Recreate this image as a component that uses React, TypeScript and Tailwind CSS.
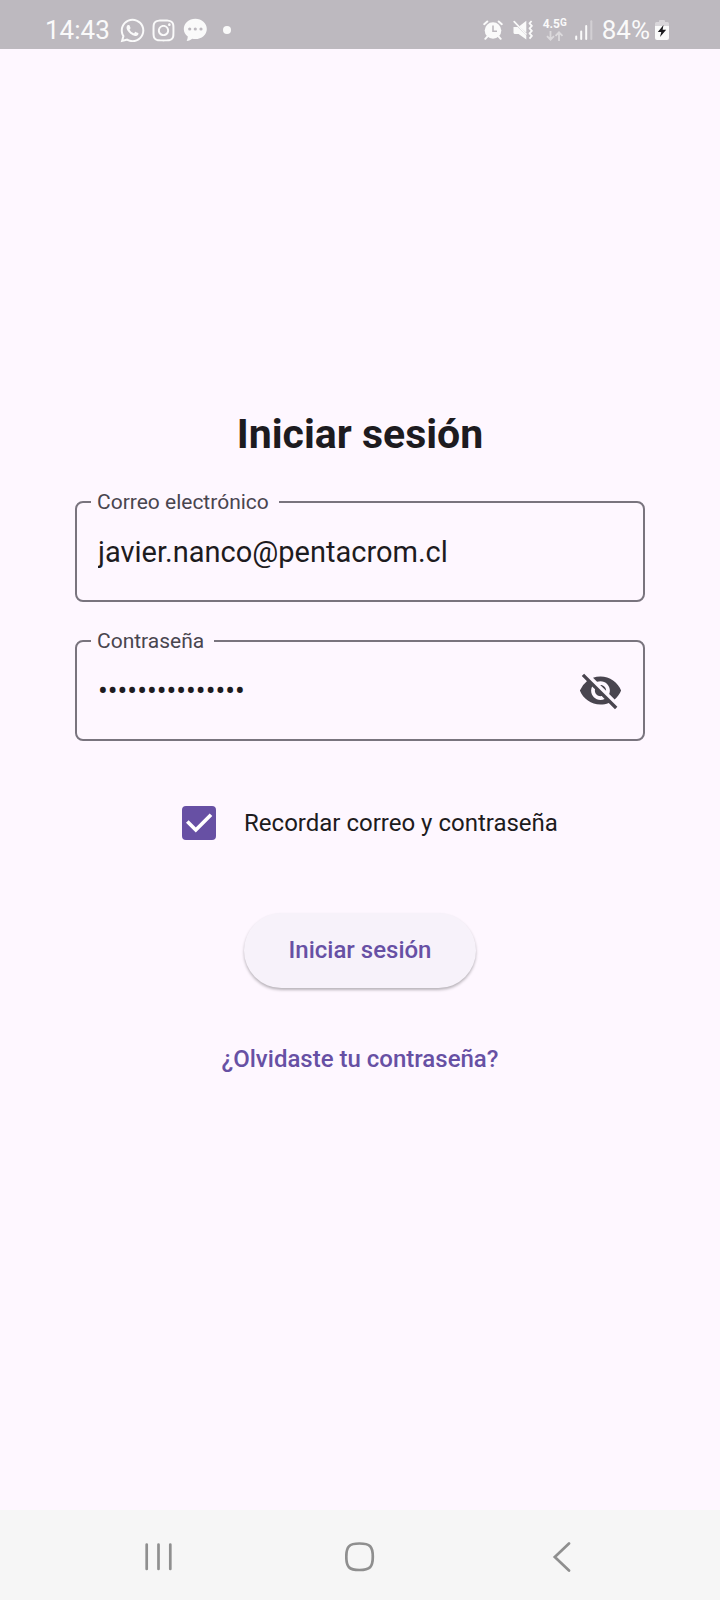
import { useState, type ReactNode } from "react";
import { FaInstagram, FaWhatsapp } from "react-icons/fa";
import { MdVisibility, MdVisibilityOff } from "react-icons/md";

function ChatIcon() {
  return (
    <svg viewBox="0 0 24 24" className="h-6 w-6" aria-hidden="true">
      <path
        fill="currentColor"
        d="M12.3 0.8C5.9 0.8 0.8 5.3 0.8 11c0 3.300 1.500 5.700 4 7.500-.1 1.500-.4 3.100-1.100 4.400 2.300-.1 4.100-.9 5.500-2.100 1 .2 2 .3 3.100.3 6.400 0 11.500-4.400 11.500-10.100S18.700.8 12.300.8Z"
      />
      <g fill="#bdb9bf">
        <circle cx="6.700" cy="11" r="1.600" />
        <circle cx="12.300" cy="11" r="1.600" />
        <circle cx="18" cy="11" r="1.600" />
      </g>
    </svg>
  );
}

function AlarmIcon() {
  return (
    <svg viewBox="0 0 20 20" className="h-5 w-5" aria-hidden="true">
      <circle cx="10" cy="10.500" r="8.300" fill="currentColor" />
      <path
        d="M1.200 4.200 4.300 1.500M18.800 4.200 15.700 1.500M4.300 16.600 2.300 18.800M15.700 16.600 17.700 18.800"
        stroke="currentColor"
        strokeWidth="2"
        strokeLinecap="round"
      />
      <path d="M10 5.500V11.300H14" fill="none" stroke="#bdb9bf" strokeWidth="1.600" />
    </svg>
  );
}

function VibrateIcon() {
  return (
    <svg viewBox="0 0 20 20" className="h-5 w-5" aria-hidden="true">
      <path fill="currentColor" d="M0.500 7h4.200L13.300 15.500V19.500L5.600 13.900H1.600Q.5 13.900 .5 12.800ZM6.300 6.200 13.300 .7V12.800Z" />
      <path d="M1.200 1.700 13 14" stroke="currentColor" strokeWidth="1.700" strokeLinecap="round" />
      <path
        d="M18.600 1 16.500 3.300 18.900 5.800 16.500 8.300 18.900 10.800 16.500 13.300 18.900 15.800 16.500 18.600"
        fill="none"
        stroke="currentColor"
        strokeWidth="1.800"
        strokeLinejoin="round"
      />
    </svg>
  );
}

function DataArrowsIcon() {
  return (
    <svg viewBox="0 0 18 10" className="h-[10px] w-[18px] opacity-50" aria-hidden="true">
      <path
        d="M4.500 0V8.500M1 5.200 4.500 8.700 8 5.200M13 10V1.500M9.500 4.800 13 1.300 16.500 4.800"
        fill="none"
        stroke="currentColor"
        strokeWidth="1.800"
      />
    </svg>
  );
}

function SignalIcon() {
  return (
    <svg viewBox="0 0 18 20" className="h-5 w-[18px]" aria-hidden="true">
      <path d="M1.200 16.500V19M6.200 11.500V19M11.200 6V19" stroke="currentColor" strokeWidth="2" strokeLinecap="round" />
      <path d="M16.300 1.300V19" stroke="currentColor" strokeWidth="2" strokeLinecap="round" opacity="0.350" />
    </svg>
  );
}

function BatteryIcon() {
  return (
    <svg viewBox="0 0 14 20" className="h-5 w-[14px]" aria-hidden="true">
      <path
        d="M4 1q0-1 1-1h4q1 0 1 1v1h2.500Q14 2 14 3.500V7H0V3.500Q0 2 1.500 2H4Z"
        fill="currentColor"
        opacity="0.450"
      />
      <path d="M0 6H14V18Q14 20 12 20H2Q0 20 0 18Z" fill="currentColor" />
      <path d="M8.500 5 2.800 12h3.500l-1.300 5 6.200-7.200H7.600Z" fill="#1c1b1f" />
    </svg>
  );
}

function StatusBar() {
  return (
    <header className="flex h-[49px] items-center justify-between bg-[#bdb9bf] pt-[11px] pr-[51px] pl-[45px] text-[26px] leading-none text-[#fafafa]">
      <div className="flex items-center">
        <span>14:43</span>
        <FaWhatsapp className="ml-[9px] h-[27px] w-[27px]" />
        <FaInstagram className="ml-[5px] h-[25px] w-[25px]" />
        <span className="ml-[7px]">
          <ChatIcon />
        </span>
        <span className="ml-4 h-2 w-2 rounded-full bg-[#fafafa]" />
      </div>
      <div className="flex items-center">
        <AlarmIcon />
        <span className="ml-[10px]">
          <VibrateIcon />
        </span>
        <span className="ml-[10px] flex flex-col items-center gap-[2px]">
          <span className="flex items-start text-[12px] leading-[10px] font-bold">
            4.5<span className="text-[10px] leading-[8px]">G</span>
          </span>
          <DataArrowsIcon />
        </span>
        <span className="ml-2">
          <SignalIcon />
        </span>
        <span className="ml-[9px]">84%</span>
        <span className="ml-[5px]">
          <BatteryIcon />
        </span>
      </div>
    </header>
  );
}

interface FieldProps {
  id: string;
  label: string;
  type: string;
  defaultValue: string;
  children?: ReactNode;
}

function OutlinedField({ id, label, type, defaultValue, children }: FieldProps) {
  return (
    <div className="relative flex h-[101px] items-center rounded-lg border-2 border-[#79747e] pr-5 pl-4">
      <label
        htmlFor={id}
        className="absolute -top-[13px] left-[14px] bg-[#fef7ff] pr-[10px] pl-[6px] text-[21px] leading-6 text-[#49454f]"
      >
        {label}
      </label>
      <input
        id={id}
        type={type}
        defaultValue={defaultValue}
        className="h-full min-w-0 flex-1 bg-transparent pl-[5px] text-[29px] text-[#1d1b20] outline-none"
      />
      {children}
    </div>
  );
}

function LoginForm() {
  const [visible, setVisible] = useState(false);
  const [remember, setRemember] = useState(true);

  return (
    <form className="flex flex-col items-center" onSubmit={(event) => event.preventDefault()}>
      <h1 className="text-[41px] leading-[44px] font-bold">Iniciar sesión</h1>
      <div className="mt-[45px] flex w-full flex-col gap-[38px]">
        <OutlinedField id="email" label="Correo electrónico" type="text" defaultValue="javier.nanco@pentacrom.cl" />
        <OutlinedField
          id="password"
          label="Contraseña"
          type={visible ? "text" : "password"}
          defaultValue="contrasena12345"
        >
          <button
            type="button"
            aria-label="Mostrar contraseña"
            onClick={() => setVisible(!visible)}
            className="text-[#49454f]"
          >
            {visible ? <MdVisibility className="h-[45px] w-[45px]" /> : <MdVisibilityOff className="h-[45px] w-[45px]" />}
          </button>
        </OutlinedField>
      </div>
      <div className="mt-[37px] flex items-center pr-2">
        <span className="grid h-[90px] w-[90px] place-items-center">
          <input
            id="remember"
            type="checkbox"
            checked={remember}
            onChange={(event) => setRemember(event.target.checked)}
            className="col-start-1 row-start-1 h-[34px] w-[34px] appearance-none rounded-[4px] border-4 border-[#49454f] checked:border-[#6750a4] checked:bg-[#6750a4]"
          />
          {remember && (
            <svg
              viewBox="0 0 34 34"
              className="pointer-events-none col-start-1 row-start-1 h-[34px] w-[34px]"
              aria-hidden="true"
            >
              <path d="M5.300 15.500 13.800 24 29 8.800" fill="none" stroke="#fff" strokeWidth="3.700" />
            </svg>
          )}
        </span>
        <label htmlFor="remember" className="text-[24px] leading-8">
          Recordar correo y contraseña
        </label>
      </div>
      <button
        type="submit"
        className="mt-[45px] h-[75px] rounded-full bg-[#f7f2fa] px-[45px] pb-[2px] text-[24px] font-medium text-[#6750a4] shadow-[0_2px_3px_rgba(0,0,0,0.28)]"
      >
        Iniciar sesión
      </button>
      <a href="#recuperar" className="mt-8 flex h-[78px] items-center px-6 text-[24px] font-medium text-[#6750a4]">
        ¿Olvidaste tu contraseña?
      </a>
    </form>
  );
}

function NavigationBar() {
  return (
    <nav className="grid h-[90px] grid-cols-3 bg-[#f6f6f6] px-[57px] pt-[3px] text-[#8f8f8f]">
      <button type="button" aria-label="Recientes" className="grid place-items-center">
        <svg viewBox="0 0 30 30" className="h-[30px] w-[30px]" aria-hidden="true">
          <path d="M3.700 2.500V27M15.500 2.500V27M27.300 2.500V27" stroke="currentColor" strokeWidth="2.700" strokeLinecap="round" />
        </svg>
      </button>
      <button type="button" aria-label="Inicio" className="grid place-items-center">
        <svg viewBox="0 0 30 30" className="h-[30px] w-[30px]" aria-hidden="true">
          <path
            d="M14.500 1.500C25 1.500 27.800 4.500 27.800 14.800S25 28 14.500 28 1.300 25 1.300 14.800 4 1.500 14.500 1.500Z"
            fill="none"
            stroke="currentColor"
            strokeWidth="2.700"
          />
        </svg>
      </button>
      <button type="button" aria-label="Atrás" className="grid place-items-center">
        <svg viewBox="0 0 30 30" className="h-[30px] w-[30px]" aria-hidden="true">
          <path d="M22 1.500 7.800 15 22 28.500" fill="none" stroke="currentColor" strokeWidth="2.700" strokeLinecap="round" />
        </svg>
      </button>
    </nav>
  );
}

export default function App() {
  return (
    <div className="flex min-h-screen flex-col bg-[#fef7ff] font-[Roboto,sans-serif] text-[#1d1b20]">
      <StatusBar />
      <main className="flex flex-1 flex-col justify-center px-[75px] pb-[49px]">
        <LoginForm />
      </main>
      <NavigationBar />
    </div>
  );
}
